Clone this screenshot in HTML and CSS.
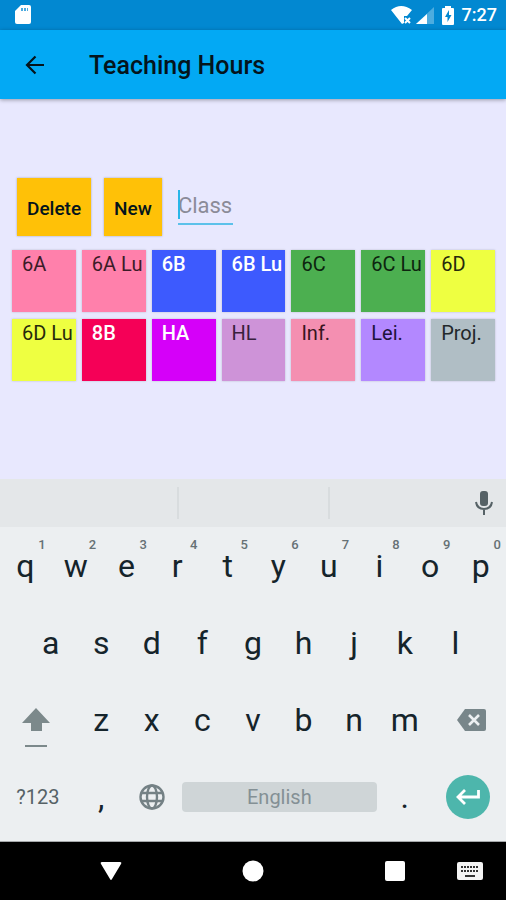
FILE: index.html
```html
<!DOCTYPE html>
<html lang="en">
<head>
<meta charset="utf-8">
<meta name="viewport" content="width=device-width, initial-scale=1">
<title>Teaching Hours</title>
<link rel="stylesheet" href="styles.css">
</head>
<body>
<div class="screen">
  <div class="status">
    <svg class="sd" viewBox="0 0 16 20" width="16" height="20" aria-hidden="true"><path fill="#fff" d="M6 0h8q2 0 2 2v15q0 2-2 2H2q-2 0-2-2V6z"/><path fill="#0288d1" d="M6 3h2v3H6zM9 3h2v3H9zM12 3h1v3h-1z" opacity=".7"/></svg>
    <span class="status-right">
      <svg viewBox="0 0 21 18" width="21" height="18" aria-hidden="true"><path fill="#fff" d="M0 4Q10-4 21 4L16 10h-3v7l-2 1z"/><path stroke="#fff" stroke-width="2" d="M14 12l5 5M19 12l-5 5"/></svg>
      <svg class="signal" viewBox="0 0 18 17" width="18" height="17" aria-hidden="true"><path fill="#4dacdf" d="M0 17L18 0v17z"/><path fill="#fff" d="M0 17L11 7v10z"/></svg>
      <svg class="battery" viewBox="0 0 12 19" width="12" height="19" aria-hidden="true"><path fill="#fff" d="M3 0h6v2h2q1 0 1 1v15q0 1-1 1H1q-1 0-1-1V3q0-1 1-1h2z"/><path fill="#0288d1" d="M7 4L3 11h2.500v5L9.500 9H7z"/></svg>
      <span class="clock">7:27</span>
    </span>
  </div>
  <header class="appbar">
    <button class="back" aria-label="Back"><svg viewBox="0 0 20 20" width="20" height="20"><path fill="none" stroke="#04141c" stroke-width="2.200" d="M19 10H2M10.500 1.500L2 10l8.500 8.500"/></svg></button>
    <h1>Teaching Hours</h1>
  </header>
  <main>
    <form class="tools">
      <button type="button" class="action">Delete</button>
      <button type="button" class="action">New</button>
      <span class="field"><input type="text" placeholder="Class" aria-label="Class"></span>
    </form>
    <div class="tiles">
      <button class="tile pink">6A</button>
      <button class="tile pink">6A Lu</button>
      <button class="tile blue">6B</button>
      <button class="tile blue">6B Lu</button>
      <button class="tile green">6C</button>
      <button class="tile green">6C Lu</button>
      <button class="tile yellow">6D</button>
      <button class="tile yellow">6D Lu</button>
      <button class="tile red">8B</button>
      <button class="tile magenta">HA</button>
      <button class="tile orchid">HL</button>
      <button class="tile rose">Inf.</button>
      <button class="tile violet">Lei.</button>
      <button class="tile gray">Proj.</button>
    </div>
  </main>
  <section class="keyboard" aria-label="Keyboard">
    <div class="suggest">
      <span></span><span></span>
      <button class="mic" aria-label="Voice input"><svg viewBox="0 0 18 24" width="18" height="24"><rect x="5" y="0" width="8" height="15" rx="3" fill="#566266"/><path fill="none" stroke="#566266" stroke-width="2" d="M1 11q1 7 8 7t8-7M9 18v6"/></svg></button>
    </div>
    <div class="row">
      <button class="key">q<sup>1</sup></button><button class="key">w<sup>2</sup></button><button class="key">e<sup>3</sup></button><button class="key">r<sup>4</sup></button><button class="key">t<sup>5</sup></button><button class="key">y<sup>6</sup></button><button class="key">u<sup>7</sup></button><button class="key">i<sup>8</sup></button><button class="key">o<sup>9</sup></button><button class="key">p<sup>0</sup></button>
    </div>
    <div class="row middle">
      <button class="key">a</button><button class="key">s</button><button class="key">d</button><button class="key">f</button><button class="key">g</button><button class="key">h</button><button class="key">j</button><button class="key">k</button><button class="key">l</button>
    </div>
    <div class="row">
      <button class="key wide shift" aria-label="Shift"><svg viewBox="0 0 28 40" width="28" height="40"><path fill="#7c898b" d="M14 0L28 15h-8v8H9v-8H0z"/><path fill="#7c898b" d="M3 37h22v2H3z"/></svg></button>
      <button class="key">z</button><button class="key">x</button><button class="key">c</button><button class="key">v</button><button class="key">b</button><button class="key">n</button><button class="key">m</button>
      <button class="key wide erase" aria-label="Backspace"><svg viewBox="0 0 29 22" width="29" height="22"><path fill="#78868a" d="M8 0h19q2 0 2 2v18q0 2-2 2H8L0 11z"/><path stroke="#eceff1" stroke-width="2.600" d="M12 6l10 10M22 6L12 16"/></svg></button>
    </div>
    <div class="row">
      <button class="key wide symbols">?123</button>
      <button class="key">,</button>
      <button class="key" aria-label="Switch language"><svg viewBox="0 0 26 26" width="26" height="26"><g fill="none" stroke="#748185" stroke-width="2.400"><circle cx="13" cy="13" r="11.500"/><ellipse cx="13" cy="13" rx="5" ry="11.500"/><path d="M2 9h22M2 17h22"/></g></svg></button>
      <span class="space-cell"><button class="space">English</button></span>
      <button class="key">.</button>
      <button class="key wide" aria-label="Enter"><span class="enter"><svg viewBox="0 0 24 16" width="24" height="16"><path fill="none" stroke="#fff" stroke-width="2.800" d="M22.500 1v7H2M9 1L2 8l7 7"/></svg></span></button>
    </div>
  </section>
  <nav class="nav">
    <button class="hide" aria-label="Hide keyboard"><svg viewBox="0 0 22 20" width="22" height="20"><path fill="#fff" d="M2 1h18q2 0 1 2l-9 15q-1 2-2 0L1 3Q0 1 2 1z"/></svg></button>
    <button class="home" aria-label="Home"><svg viewBox="0 0 22 22" width="22" height="22"><circle cx="11" cy="11" r="10.500" fill="#fff"/></svg></button>
    <button class="recent" aria-label="Recent apps"><svg viewBox="0 0 20 20" width="20" height="20"><rect width="20" height="20" rx="2" fill="#fff"/></svg></button>
    <button class="ime" aria-label="Choose keyboard"><svg viewBox="0 0 26 18" width="26" height="18"><rect width="26" height="18" rx="2" fill="#f4f4f4"/><path stroke="#333" stroke-width="2" stroke-dasharray="2 1" d="M4 5h18M4 9h18"/><path stroke="#333" stroke-width="2" d="M8 14h10"/></svg></button>
  </nav>
</div>
</body>
</html>
```

FILE: styles.css
```css
* { box-sizing: border-box; }
body { margin: 0; font-family: Roboto, "Liberation Sans", sans-serif; background: #e8e8fe; color: #04141c; }
button { font: inherit; color: inherit; border: 0; padding: 0; margin: 0; background: none; }
svg { display: block; }
.screen { min-height: 100vh; display: flex; flex-direction: column; }

.status { height: 30px; background: #0288d1; display: flex; align-items: center; justify-content: space-between; padding: 0 9px 0 15px; }
.status-right { display: flex; align-items: center; }
.signal { margin-left: 4px; }
.battery { margin: 0 8px; }
.clock { color: #fff; font-size: 18px; font-weight: 500; line-height: 20px; }

.appbar { height: 69px; background: #03a9f4; display: flex; align-items: center; padding: 0 25px; gap: 44px; box-shadow: 0 1px 4px rgba(0, 0, 0, .35); }
.appbar h1 { margin: 0; font-size: 25px; line-height: 30px; font-weight: 500; padding-top: 2px; }

main { flex: 1; padding: 79px 11px 0 12px; }
.tools { display: flex; gap: 13px; padding-left: 5px; }
.action { height: 58px; padding: 2px 10px 0; background: #ffc107; font-size: 19px; font-weight: 500; box-shadow: 0 0 2px rgba(0, 0, 0, .3); }
.field { position: relative; align-self: flex-start; margin: 10px 0 0 3px; }
.field::before { content: ""; position: absolute; left: 0; top: 2px; width: 2px; height: 29px; background: #29b6e8; }
.field input { display: block; width: 55px; height: 37px; padding: 0; border: 0; border-bottom: 2px solid #5cc1ea; background: none; font: 22px Roboto, sans-serif; outline: 0; border-radius: 0; }
.field input::placeholder { color: #8b8b98; opacity: 1; }

.tiles { display: grid; grid-template-columns: repeat(7, 1fr); gap: 7px 6px; margin-top: 14px; }
.tile { height: 62px; display: flex; align-items: flex-start; padding: 2px 0 0 10px; font-size: 20px; line-height: 24px; white-space: nowrap; box-shadow: 0 0 2px rgba(0, 0, 0, .2); }
.pink { background: #ff80ab; color: #3b1b28; }
.blue { background: #3d5afe; color: #fff; font-weight: 500; }
.green { background: #4caf50; color: #0d240f; }
.yellow { background: #eeff41; color: #272a0b; }
.red { background: #f50057; color: #fff; font-weight: 500; }
.magenta { background: #d500f9; color: #fff; font-weight: 500; }
.orchid { background: #ce93d8; color: #38203d; }
.rose { background: #f48fb1; color: #38141f; }
.violet { background: #b388ff; color: #20123a; }
.gray { background: #b0bec5; color: #22282b; }

.keyboard { background: #eceff1; padding-bottom: 6px; border-bottom: 1px solid #a5a8aa; }
.suggest { height: 48px; background: #e4e7e9; display: flex; align-items: center; padding-left: 28px; }
.suggest span { flex: 0 0 151px; height: 32px; border-right: 2px solid #d8dcde; }
.mic { margin-left: auto; padding-right: 13px; }
.row { display: flex; height: 77px; }
.middle { padding: 0 5%; }
.key { flex: 1 1 10%; position: relative; display: flex; align-items: center; justify-content: center; font-size: 32px; line-height: 38px; color: #15242b; }
.key sup { position: absolute; top: 9px; right: 5px; font-size: 13px; font-weight: 500; line-height: 18px; color: #667175; }
.wide { flex-basis: 15%; }
.shift { padding: 16px 4px 0 0; }
.erase { padding-left: 8px; }
.symbols { font-size: 20px; color: #566266; }
.space-cell { flex: 1 1 40%; display: flex; align-items: center; padding: 0 3px 0 5px; }
.space { flex: 1; height: 30px; border-radius: 4px; background: #cfd5d7; color: #849095; font-size: 20px; }
.enter { width: 44px; height: 44px; border-radius: 50%; background: #4db6ac; display: flex; align-items: center; justify-content: center; }

.nav { height: 58px; background: #000; display: grid; grid-template-columns: 73fr 76fr 66fr 76fr 66fr 76fr 73fr; align-items: center; }
.nav button { display: flex; justify-content: center; }
.hide { grid-column: 2; }
.home { grid-column: 4; }
.recent { grid-column: 6; }
.ime { grid-column: 7; }
```
